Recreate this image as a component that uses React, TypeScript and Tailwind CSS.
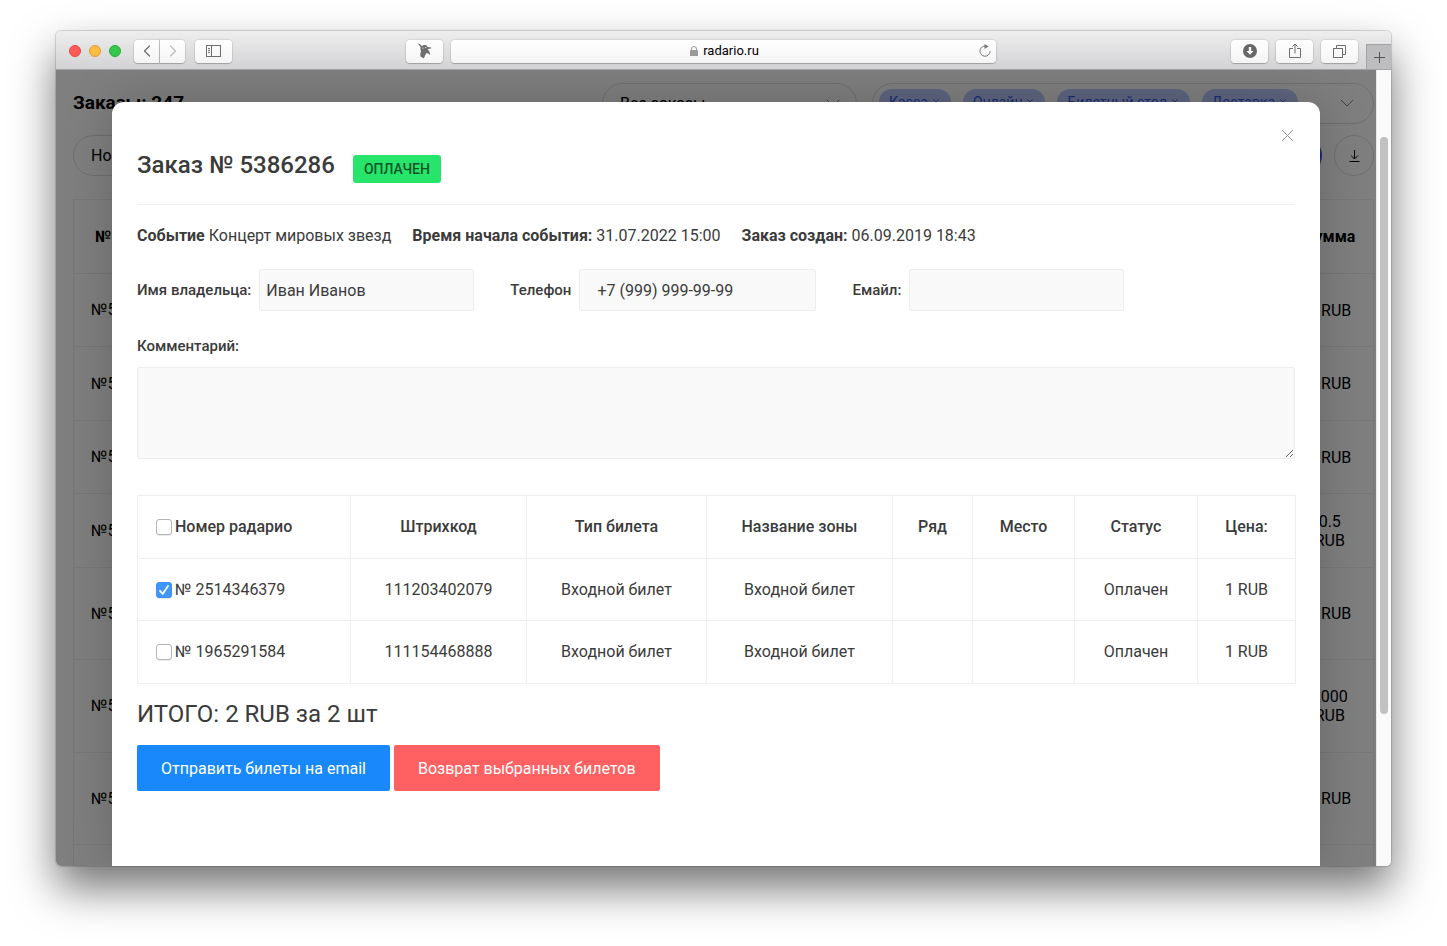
import clsx from "clsx";
import { ChevronDown, ChevronLeft, ChevronRight, X } from "lucide-react";
import type { ReactNode } from "react";

const channels = ["Касса", "Онлайн", "Билетный стол", "Доставка"];

const orders = [
  { sum: ["1 RUB"], height: "h-[73px]" },
  { sum: ["1 RUB"], height: "h-[74px]" },
  { sum: ["1 RUB"], height: "h-[73px]" },
  { sum: ["0.5", "RUB"], height: "h-[74px]" },
  { sum: ["1 RUB"], height: "h-[92px]" },
  { sum: ["2000", "RUB"], height: "h-[93px]" },
  { sum: ["1 RUB"], height: "h-[92px]" },
  { sum: [], height: "h-[92px]" },
];

const tickets = [
  { id: "2514346379", barcode: "111203402079", checked: true },
  { id: "1965291584", barcode: "111154468888", checked: false },
];

const cellClass = "border border-[#eeeeee]";
const fieldClass =
  "h-[42px] rounded-xs border border-[#eeeeee] bg-[#f9f9f9] text-base text-[#3b3b3b] outline-none";

function ToolbarButton({
  label,
  className,
  children,
}: {
  label: string;
  className?: string;
  children: ReactNode;
}) {
  return (
    <button
      aria-label={label}
      className={clsx(
        "flex h-[23px] items-center justify-center bg-linear-to-b from-white to-[#f4f4f4] text-[#6e6e6e] shadow-[0_0_1px_1px_rgba(0,0,0,0.08),0_1px_1px_rgba(0,0,0,0.2)]",
        className ?? "w-[37px] rounded-sm"
      )}
    >
      {children}
    </button>
  );
}

function BrowserToolbar() {
  return (
    <div className="grid h-[39px] shrink-0 grid-cols-[1fr_545px_1fr] border-b border-[#a3a3a3] bg-linear-to-b from-[#efeeef] to-[#d3d2d4] pt-[2px]">
      <div className="flex items-center pr-2 pl-[13px]">
        <div className="flex gap-2">
          <span className="size-3 rounded-full border border-[#e2463f] bg-[#fc5b57]" />
          <span className="size-3 rounded-full border border-[#dfa033] bg-[#fdbc40]" />
          <span className="size-3 rounded-full border border-[#27a935] bg-[#34c84a]" />
        </div>
        <div className="mr-[10px] ml-[13px] flex gap-px">
          <ToolbarButton label="Назад" className="w-[25px] rounded-l-sm">
            <ChevronLeft className="size-5" strokeWidth={1.5} />
          </ToolbarButton>
          <ToolbarButton label="Вперёд" className="w-[25px] rounded-r-sm">
            <ChevronRight className="size-5 text-[#bdbdbd]" strokeWidth={1.5} />
          </ToolbarButton>
        </div>
        <ToolbarButton label="Боковая панель">
          <svg width="16" height="13" viewBox="0 0 16 13" fill="none" stroke="currentColor">
            <rect x="0.5" y="0.5" width="14" height="11" />
            <path d="M5.5 .5v11M2 3.5h2M2 5.5h2M2 7.5h2" />
          </svg>
        </ToolbarButton>
        <div className="ml-auto">
          <ToolbarButton label="Расширение">
            <svg width="15" height="16" viewBox="0 0 15 16" fill="currentColor">
              <path d="M.8.5 3 1.200 5 3.200 6.500 2 9 2l1.500 2 3.800.4-.3 1.200-3.300.3 1.300 2.100 1 2.500-.3 1.500-1.500-1.500-1.500-.4-1.200 1.300-.8 2.400L6.500 15.500 5 14.200l-1.500-.4-.3-2.800 .8-2.500-.6-2.200L3.500 4Z" />
              <circle cx="6" cy="5" r=".6" fill="#fff" />
              <circle cx="8.800" cy="4.600" r=".6" fill="#fff" />
            </svg>
          </ToolbarButton>
        </div>
      </div>
      <div className="my-auto flex h-[23px] items-center rounded-sm bg-linear-to-b from-white to-[#f4f4f4] px-1 shadow-[0_0_1px_1px_rgba(0,0,0,0.08),0_1px_1px_rgba(0,0,0,0.2)]">
        <div className="flex flex-1 items-center justify-center gap-[5px] pl-4">
          <svg width="8" height="10" viewBox="0 0 8 10">
            <rect y="4" width="8" height="6" rx=".5" fill="#9a9a9a" />
            <path d="M1.500 4.500V3a2.500 2.500 0 0 1 5 0v1.500" fill="none" stroke="#9a9a9a" />
          </svg>
          <span className="text-[13px] leading-4 text-black">radario.ru</span>
        </div>
        <button aria-label="Обновить">
          <svg width="14" height="14" viewBox="0 0 14 14" fill="none" stroke="#777">
            <path d="M9.500 2.700A5.100 5.100 0 1 0 12.100 7.200M7 2.200h2" />
            <path d="M6.500 0 10.500 2.600 6.500 5Z" fill="#777" stroke="none" />
          </svg>
        </button>
      </div>
      <div className="flex items-center justify-end gap-2">
        <ToolbarButton label="Загрузки">
          <svg width="14" height="14" viewBox="0 0 14 14">
            <circle cx="7" cy="7" r="7" fill="#666" />
            <path d="M5.800 3h2.400v4h2.300L7 10.800 3.500 7h2.300Z" fill="#fff" />
          </svg>
        </ToolbarButton>
        <ToolbarButton label="Поделиться">
          <svg width="12" height="16" viewBox="0 0 12 16" fill="none" stroke="currentColor">
            <path d="M4 5.500H.5v9h11v-9H8M6 10.500V1M3.500 3.500 6 1l2.500 2.500" />
          </svg>
        </ToolbarButton>
        <ToolbarButton label="Вкладки">
          <svg width="13" height="13" viewBox="0 0 13 13" fill="none" stroke="currentColor">
            <rect x=".5" y="3.500" width="9" height="9" />
            <path d="M3.500 3V.5h9v9H10" />
          </svg>
        </ToolbarButton>
        <button
          aria-label="Новая вкладка"
          className="flex h-[25px] w-[25px] items-center justify-center self-end border-t border-l border-[#a3a3a3] bg-[#bdbdbf] text-[#555]"
        >
          <svg width="11" height="11" viewBox="0 0 11 11" stroke="currentColor">
            <path d="M5.500 0v11M0 5.500h11" />
          </svg>
        </button>
      </div>
    </div>
  );
}

/* Orders list that stays under the dimmed backdrop */
function OrdersPage() {
  return (
    <div className="pt-[13px] pr-[2px] pl-[17px] text-base text-black">
      <div className="flex items-center gap-[15px]">
        <h1 className="flex-1 text-[19px] font-bold">Заказы: 247</h1>
        <div className="relative w-[255px]">
          <select
            aria-label="Все заказы"
            className="h-[41px] w-full appearance-none rounded-full border border-[#dddddd] px-[17px]"
          >
            <option>Все заказы</option>
          </select>
          <ChevronDown
            className="absolute top-2 right-3 size-6 text-[#888]"
            strokeWidth={1}
          />
        </div>
        <div className="flex h-[41px] w-[502px] items-start gap-3 rounded-full border border-[#dddddd] py-[5px] pr-[14px] pl-[6px]">
          {channels.map((channel) => (
            <button
              key={channel}
              className="flex h-[26px] items-center gap-[3px] rounded-full bg-[#bccbff] px-[10px] text-sm text-[#3757e8]"
            >
              {channel}
              <X className="size-[10px]" strokeWidth={2} />
            </button>
          ))}
          <ChevronDown className="mt-0.5 ml-auto size-6 text-[#888]" strokeWidth={1} />
        </div>
      </div>

      <div className="mt-[11px] flex gap-3">
        <input
          aria-label="Номер"
          placeholder="Номер"
          className="h-[41px] flex-1 rounded-full border border-[#dddddd] px-[17px] placeholder:text-black"
        />
        <button aria-label="Найти" className="h-[41px] w-32 rounded-full bg-[#3757e8]" />
        <button
          aria-label="Скачать"
          className="flex h-[41px] w-10 items-center justify-center rounded-full border border-[#dddddd]"
        >
          <svg width="11" height="12" viewBox="0 0 11 12" fill="none" stroke="#000">
            <path d="M5.500 0v9M2 5.500 5.500 9 9 5.500M.5 11.500h10" />
          </svg>
        </button>
      </div>

      <table className="mt-[23px] w-full table-fixed border-collapse">
        <colgroup>
          <col className="w-[120px]" />
          <col />
          <col className="w-[87px]" />
        </colgroup>
        <thead>
          <tr className="h-[74px] border border-[#eeeeee]">
            <th className="pl-[21px] text-left">№</th>
            <th />
            <th>Сумма</th>
          </tr>
        </thead>
        <tbody>
          {orders.map((order, index) => (
            <tr key={index} className={clsx("border border-[#eeeeee]", order.height)}>
              <td className="pl-[17px]">{order.sum.length > 0 && "№53"}</td>
              <td />
              <td className="text-center leading-[19px]">
                {order.sum.map((line) => (
                  <div key={line}>{line}</div>
                ))}
              </td>
            </tr>
          ))}
        </tbody>
      </table>
    </div>
  );
}

function TicketCheckbox({
  children,
  checked = false,
}: {
  children: ReactNode;
  checked?: boolean;
}) {
  return (
    <label className="flex items-center gap-[3px]">
      <span className="relative flex size-4">
        <input
          type="checkbox"
          defaultChecked={checked}
          className="peer size-4 appearance-none rounded-[3px] border border-[#b5b5b5] bg-white shadow-[0_1px_0_rgba(0,0,0,0.08)] checked:border-[#3b8ff5] checked:bg-[#3f97fb]"
        />
        <svg
          viewBox="0 0 16 16"
          className="pointer-events-none absolute inset-0 hidden size-4 peer-checked:block"
          fill="none"
          stroke="#fff"
          strokeWidth="1.8"
          strokeLinecap="round"
        >
          <path d="m4 8.800 2.800 3L12 4" />
        </svg>
      </span>
      {children}
    </label>
  );
}

function OrderModal() {
  return (
    <div
      role="dialog"
      aria-labelledby="order-title"
      className="relative min-h-full rounded-t-xl bg-white px-[25px] pt-[45px] text-base text-[#3b3b3b] shadow-[0_0_50px_rgba(0,0,0,0.2)]"
    >
      <button aria-label="Закрыть" className="absolute top-[27px] right-[26px]">
        <svg width="13" height="13" viewBox="0 0 13 13" stroke="#909399">
          <path d="M1 1l11 11M12 1 1 12" />
        </svg>
      </button>

      <div className="flex items-center gap-[18px] border-b border-[#eeeeee] pb-[21px]">
        <h2 id="order-title" className="text-2xl leading-9 font-medium">
          Заказ № 5386286
        </h2>
        <span className="mt-2 rounded-[3px] bg-[#26e56a] px-[11px] text-sm leading-7 font-medium text-[#0d5528]">
          ОПЛАЧЕН
        </span>
      </div>

      <div className="mt-[19px] flex gap-[21px] leading-6">
        <p>
          <b>Событие</b> Концерт мировых звезд
        </p>
        <p>
          <b>Время начала события:</b> 31.07.2022 15:00
        </p>
        <p>
          <b>Заказ создан:</b> 06.09.2019 18:43
        </p>
      </div>

      <div className="mt-[21px] flex gap-9 text-[15px] font-medium">
        <div className="flex items-center gap-2">
          <label htmlFor="owner">Имя владельца:</label>
          <input
            id="owner"
            defaultValue="Иван Иванов"
            className={clsx(fieldClass, "w-[215px] px-[6px] font-normal")}
          />
        </div>
        <div className="flex items-center gap-2">
          <label htmlFor="phone">Телефон</label>
          <input
            id="phone"
            type="tel"
            defaultValue="+7 (999) 999-99-99"
            className={clsx(fieldClass, "w-[237px] px-[17px] font-normal")}
          />
        </div>
        <div className="flex items-center gap-2">
          <label htmlFor="email">Емайл:</label>
          <input
            id="email"
            type="email"
            className={clsx(fieldClass, "w-[215px] px-[6px] font-normal")}
          />
        </div>
      </div>

      <label htmlFor="comment" className="mt-6 block text-[15px] leading-[22px] font-medium">
        Комментарий:
      </label>
      <textarea
        id="comment"
        className="mt-[10px] block h-[92px] w-full resize-y rounded-xs border border-[#eeeeee] bg-[#f9f9f9] p-2 outline-none"
      />

      <table className="mt-9 w-full table-fixed border-collapse text-center">
        <colgroup>
          <col className="w-[213px]" />
          <col className="w-[176px]" />
          <col className="w-[180px]" />
          <col className="w-[186px]" />
          <col className="w-[80px]" />
          <col className="w-[102px]" />
          <col className="w-[123px]" />
          <col className="w-[98px]" />
        </colgroup>
        <thead>
          <tr className="h-[63px] [&>th]:font-medium">
            <th className={clsx(cellClass, "pl-[18px]")}>
              <TicketCheckbox>Номер радарио</TicketCheckbox>
            </th>
            <th className={cellClass}>Штрихкод</th>
            <th className={cellClass}>Тип билета</th>
            <th className={cellClass}>Название зоны</th>
            <th className={cellClass}>Ряд</th>
            <th className={cellClass}>Место</th>
            <th className={cellClass}>Статус</th>
            <th className={cellClass}>Цена:</th>
          </tr>
        </thead>
        <tbody>
          {tickets.map((ticket) => (
            <tr key={ticket.id} className="h-[62px] last:h-[63px]">
              <td className={clsx(cellClass, "pl-[18px]")}>
                <TicketCheckbox checked={ticket.checked}>№ {ticket.id}</TicketCheckbox>
              </td>
              <td className={cellClass}>{ticket.barcode}</td>
              <td className={cellClass}>Входной билет</td>
              <td className={cellClass}>Входной билет</td>
              <td className={cellClass} />
              <td className={cellClass} />
              <td className={cellClass}>Оплачен</td>
              <td className={cellClass}>1 RUB</td>
            </tr>
          ))}
        </tbody>
      </table>

      <p className="mt-3 text-2xl leading-9">ИТОГО: 2 RUB за 2 шт</p>

      <div className="mt-[13px] flex gap-1 text-white">
        <button className="h-[46px] rounded-xs bg-[#1888fb] px-6 pt-px">
          Отправить билеты на email
        </button>
        <button className="h-[46px] rounded-xs bg-[#ff6163] px-6 pt-px">
          Возврат выбранных билетов
        </button>
      </div>
    </div>
  );
}

export default function App() {
  return (
    <div className="flex h-screen flex-col bg-white px-14 pt-[31px] pb-20 font-[Roboto,sans-serif]">
      <div className="flex min-h-0 flex-1 flex-col overflow-hidden rounded-[5px] shadow-[0_0_1px_1px_rgba(0,0,0,0.15),0_22px_44px_rgba(0,0,0,0.55)]">
        <BrowserToolbar />
        <div className="flex min-h-0 flex-1">
          <div className="relative flex-1 overflow-hidden bg-white">
            <OrdersPage />
            <div className="absolute inset-0 bg-black/50 px-14 pt-8">
              <OrderModal />
            </div>
          </div>
          <div className="w-[15px] border-l border-[#e8e8e8] bg-[#fafafa] px-[3px] pt-[67px]">
            <div className="h-[577px] w-2 rounded-full bg-[#c1c1c1]" />
          </div>
        </div>
      </div>
    </div>
  );
}
